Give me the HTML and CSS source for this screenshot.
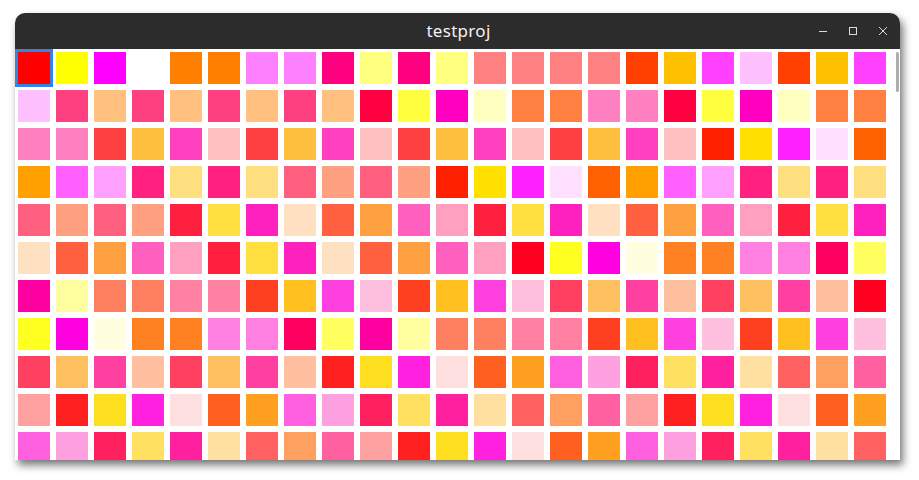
FILE: index.html
```html
<!DOCTYPE html>
<html lang="en">
<head>
    <meta charset="UTF-8">
    <meta name="viewport" content="width=device-width, initial-scale=1.0">
    <title>testproj</title>
    <link rel="stylesheet" href="styles.css">
</head>
<body>
    <div class="window">
        <div class="titlebar">
            <span class="title">testproj</span>
            <div class="controls">
                <svg class="ctl" width="14" height="14" viewBox="0 0 14 14"><path d="M3 7.5h8" stroke="#dcdcdc" stroke-width="1"/></svg>
                <svg class="ctl" width="14" height="14" viewBox="0 0 14 14"><rect x="3.5" y="3.5" width="7" height="7" fill="none" stroke="#dcdcdc" stroke-width="1"/></svg>
                <svg class="ctl" width="14" height="14" viewBox="0 0 14 14"><path d="M3 3l8 8M11 3l-8 8" stroke="#dcdcdc" stroke-width="1"/></svg>
            </div>
        </div>
        <div class="content">
            <div id="grid" class="grid"></div>
            <div class="scrollbar"></div>
        </div>
    </div>

    <script>
        // colori delle celle, riga per riga (23 colonne)
        const rows = [
            "ff0000 ffff00 ff00ff ffffff ff8000 ff8000 ff80ff ff80ff ff0080 ffff80 ff0080 ffff80 ff8080 ff8080 ff8080 ff8080 ff4000 ffc000 ff40ff ffc0ff ff4000 ffc000 ff40ff",
            "ffc0ff ff4080 ffc080 ff4080 ffc080 ff4080 ffc080 ff4080 ffc080 ff0040 ffff40 ff00c0 ffffc0 ff8040 ff8040 ff80c0 ff80c0 ff0040 ffff40 ff00c0 ffffc0 ff8040 ff8040",
            "ff80c0 ff80c0 ff4040 ffc040 ff40c0 ffc0c0 ff4040 ffc040 ff40c0 ffc0c0 ff4040 ffc040 ff40c0 ffc0c0 ff4040 ffc040 ff40c0 ffc0c0 ff2000 ffe000 ff20ff ffe0ff ff6000",
            "ffa000 ff60ff ffa0ff ff2080 ffe080 ff2080 ffe080 ff6080 ffa080 ff6080 ffa080 ff2000 ffe000 ff20ff ffe0ff ff6000 ffa000 ff60ff ffa0ff ff2080 ffe080 ff2080 ffe080",
            "ff6080 ffa080 ff6080 ffa080 ff2040 ffe040 ff20c0 ffe0c0 ff6040 ffa040 ff60c0 ffa0c0 ff2040 ffe040 ff20c0 ffe0c0 ff6040 ffa040 ff60c0 ffa0c0 ff2040 ffe040 ff20c0",
            "ffe0c0 ff6040 ffa040 ff60c0 ffa0c0 ff2040 ffe040 ff20c0 ffe0c0 ff6040 ffa040 ff60c0 ffa0c0 ff0020 ffff20 ff00e0 ffffe0 ff8020 ff8020 ff80e0 ff80e0 ff0060 ffff60",
            "ff00a0 ffffa0 ff8060 ff8060 ff80a0 ff80a0 ff4020 ffc020 ff40e0 ffc0e0 ff4020 ffc020 ff40e0 ffc0e0 ff4060 ffc060 ff40a0 ffc0a0 ff4060 ffc060 ff40a0 ffc0a0 ff0020",
            "ffff20 ff00e0 ffffe0 ff8020 ff8020 ff80e0 ff80e0 ff0060 ffff60 ff00a0 ffffa0 ff8060 ff8060 ff80a0 ff80a0 ff4020 ffc020 ff40e0 ffc0e0 ff4020 ffc020 ff40e0 ffc0e0",
            "ff4060 ffc060 ff40a0 ffc0a0 ff4060 ffc060 ff40a0 ffc0a0 ff2020 ffe020 ff20e0 ffe0e0 ff6020 ffa020 ff60e0 ffa0e0 ff2060 ffe060 ff20a0 ffe0a0 ff6060 ffa060 ff60a0",
            "ffa0a0 ff2020 ffe020 ff20e0 ffe0e0 ff6020 ffa020 ff60e0 ffa0e0 ff2060 ffe060 ff20a0 ffe0a0 ff6060 ffa060 ff60a0 ffa0a0 ff2020 ffe020 ff20e0 ffe0e0 ff6020 ffa020",
            "ff60e0 ffa0e0 ff2060 ffe060 ff20a0 ffe0a0 ff6060 ffa060 ff60a0 ffa0a0 ff2020 ffe020 ff20e0 ffe0e0 ff6020 ffa020 ff60e0 ffa0e0 ff2060 ffe060 ff20a0 ffe0a0 ff6060"
        ];
        const grid = document.getElementById('grid');

        rows.forEach(function(row, r) {
            row.split(' ').forEach(function(hex, c) {
                const cell = document.createElement('div');
                cell.className = 'cell';
                if (r === 0 && c === 0) {
                    cell.classList.add('selected');
                }
                cell.style.backgroundColor = '#' + hex;
                grid.appendChild(cell);
            });
        });
    </script>
</body>
</html>
```

FILE: styles.css
```css
html {
    background-color: #ffffff;
}
body {
    margin: 0;
    padding: 13px 0 20px 15px;
    font-family: "Noto Sans", "DejaVu Sans", sans-serif;
}
.window {
    width: 885px;
    height: 447px;
    border-radius: 10px 10px 0 0;
    background-color: #ffffff;
    box-shadow: 3px 5px 8px rgba(0, 0, 0, 0.55);
    overflow: hidden;
    display: flex;
    flex-direction: column;
}
.titlebar {
    height: 36px;
    flex: none;
    background-color: #2c2c2c;
    display: flex;
    align-items: center;
    justify-content: center;
    position: relative;
}
.title {
    color: #f2f2f2;
    font-size: 17px;
    letter-spacing: 0.3px;
    margin-left: 2px;
    margin-top: -1px;
}
.controls {
    position: absolute;
    right: 10px;
    top: 11px;
    display: flex;
    gap: 16px;
}
.content {
    flex: 1;
    position: relative;
    overflow: hidden;
}
.grid {
    display: grid;
    grid-template-columns: repeat(23, 38px);
    grid-auto-rows: 38px;
}
.cell {
    box-sizing: border-box;
    padding: 3px;
    background-clip: content-box;
}
.cell.selected {
    box-shadow: inset 0 0 0 3px #3584e4;
}
.scrollbar {
    position: absolute;
    right: 1px;
    top: 3px;
    width: 3px;
    height: 40px;
    border-radius: 2px;
    background-color: #aeaeae;
}
```
